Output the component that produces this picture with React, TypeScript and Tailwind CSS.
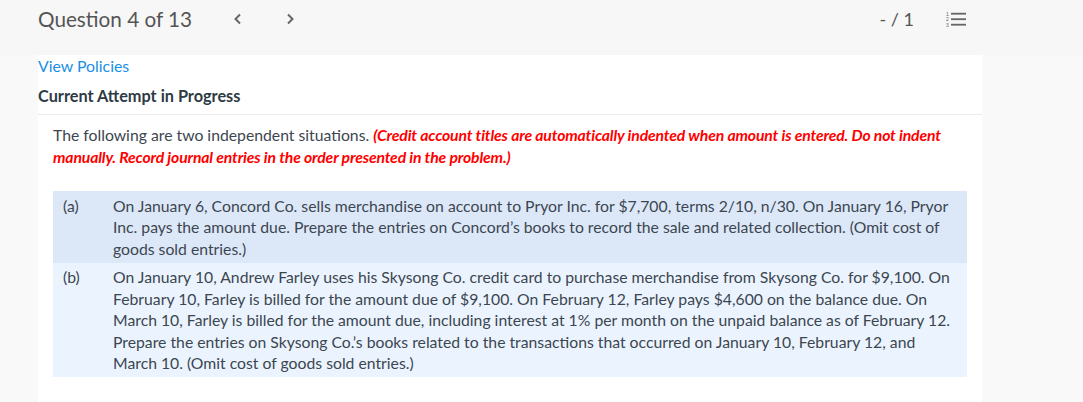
import type { ReactNode } from "react";

const situations: { label: string; text: string; shade: string }[] = [
  {
    label: "(a)",
    text: "On January 6, Concord Co. sells merchandise on account to Pryor Inc. for $7,700, terms 2/10, n/30. On January 16, Pryor Inc. pays the amount due. Prepare the entries on Concord\u2019s books to record the sale and related collection. (Omit cost of goods sold entries.)",
    shade: "bg-[#dce8f8]",
  },
  {
    label: "(b)",
    text: "On January 10, Andrew Farley uses his Skysong Co. credit card to purchase merchandise from Skysong Co. for $9,100. On February 10, Farley is billed for the amount due of $9,100. On February 12, Farley pays $4,600 on the balance due. On March 10, Farley is billed for the amount due, including interest at 1% per month on the unpaid balance as of February 12. Prepare the entries on Skysong Co.\u2019s books related to the transactions that occurred on January 10, February 12, and March 10. (Omit cost of goods sold entries.)",
    shade: "bg-[#ebf4fe]",
  },
];

function Chevron({ dir }: { dir: "left" | "right" }) {
  return (
    <svg width="10" height="12" viewBox="0 0 10 12" className="text-[#666]">
      <path
        d={dir === "left" ? "M7 1.5 L2.5 6 L7 10.5" : "M3 1.5 L7.5 6 L3 10.5"}
        fill="none"
        stroke="currentColor"
        strokeWidth="2"
      />
    </svg>
  );
}

function ListIcon() {
  return (
    <svg width="21" height="16" viewBox="0 0 21 16" className="text-[#666]">
      <text x="0" y="4.5" fontSize="5" fill="currentColor" fontFamily="Liberation Sans, sans-serif">1</text>
      <text x="0" y="10" fontSize="5" fill="currentColor" fontFamily="Liberation Sans, sans-serif">2</text>
      <text x="0" y="15.5" fontSize="5" fill="currentColor" fontFamily="Liberation Sans, sans-serif">3</text>
      <rect x="5" y="1.8" width="15" height="1.8" fill="currentColor" />
      <rect x="5" y="7.3" width="15" height="1.8" fill="currentColor" />
      <rect x="5" y="12.8" width="15" height="1.8" fill="currentColor" />
    </svg>
  );
}

function Row({ label, children, shade }: { label: string; children: ReactNode; shade: string }) {
  return (
    <div className={`flex ${shade} py-[3.5px]`}>
      <div className="w-[60px] shrink-0 pl-[10px]">{label}</div>
      <div className="flex-1 pr-[12px]">{children}</div>
    </div>
  );
}

export default function App() {
  return (
    <div
      className="min-h-[402px] bg-[#f9f9f9] text-[#3c4650]"
      style={{ fontFamily: "Lato, 'Noto Sans', sans-serif" }}
    >
      <header className="flex h-[38px] items-center bg-[#f7f7f7] pl-[38px] pr-[116px] text-[#555]">
        <h1 className="text-[20.7px] leading-none">Question 4 of 13</h1>
        <div className="ml-[41px] flex items-center gap-[42px]">
          <Chevron dir="left" />
          <Chevron dir="right" />
        </div>
        <div className="ml-auto flex items-center gap-[32px]">
          <span className="text-[18px] leading-none">- / 1</span>
          <ListIcon />
        </div>
      </header>
      <div className="h-[17px] bg-[#f7f7f7]" />

      <main className="mx-[38px] w-[944px] bg-white pb-[40px]">
        <div className="border-b border-[#ececec] pb-[8px]">
          <a className="block pt-[1px] text-[15.85px] leading-[20px] text-[#1a8fe6]">View Policies</a>
          <p className="mt-[10px] text-[16.3px] font-bold leading-[20px] text-[#2e3a44]">
            Current Attempt in Progress
          </p>
        </div>

        <div className="px-[15px] pt-[9px] text-[15.75px]">
          <p className="leading-[22px]">
            The following are two independent situations.{" "}
            <span className="font-bold italic tracking-[-0.15px] text-[#f00]">
              (Credit account titles are automatically indented when amount is entered. Do not indent
              manually. Record journal entries in the order presented in the problem.)
            </span>
          </p>

          <div className="mt-[23px] leading-[21.5px]">
            {situations.map((s) => (
              <Row key={s.label} label={s.label} shade={s.shade}>
                {s.text}
              </Row>
            ))}
          </div>
        </div>
      </main>
    </div>
  );
}
